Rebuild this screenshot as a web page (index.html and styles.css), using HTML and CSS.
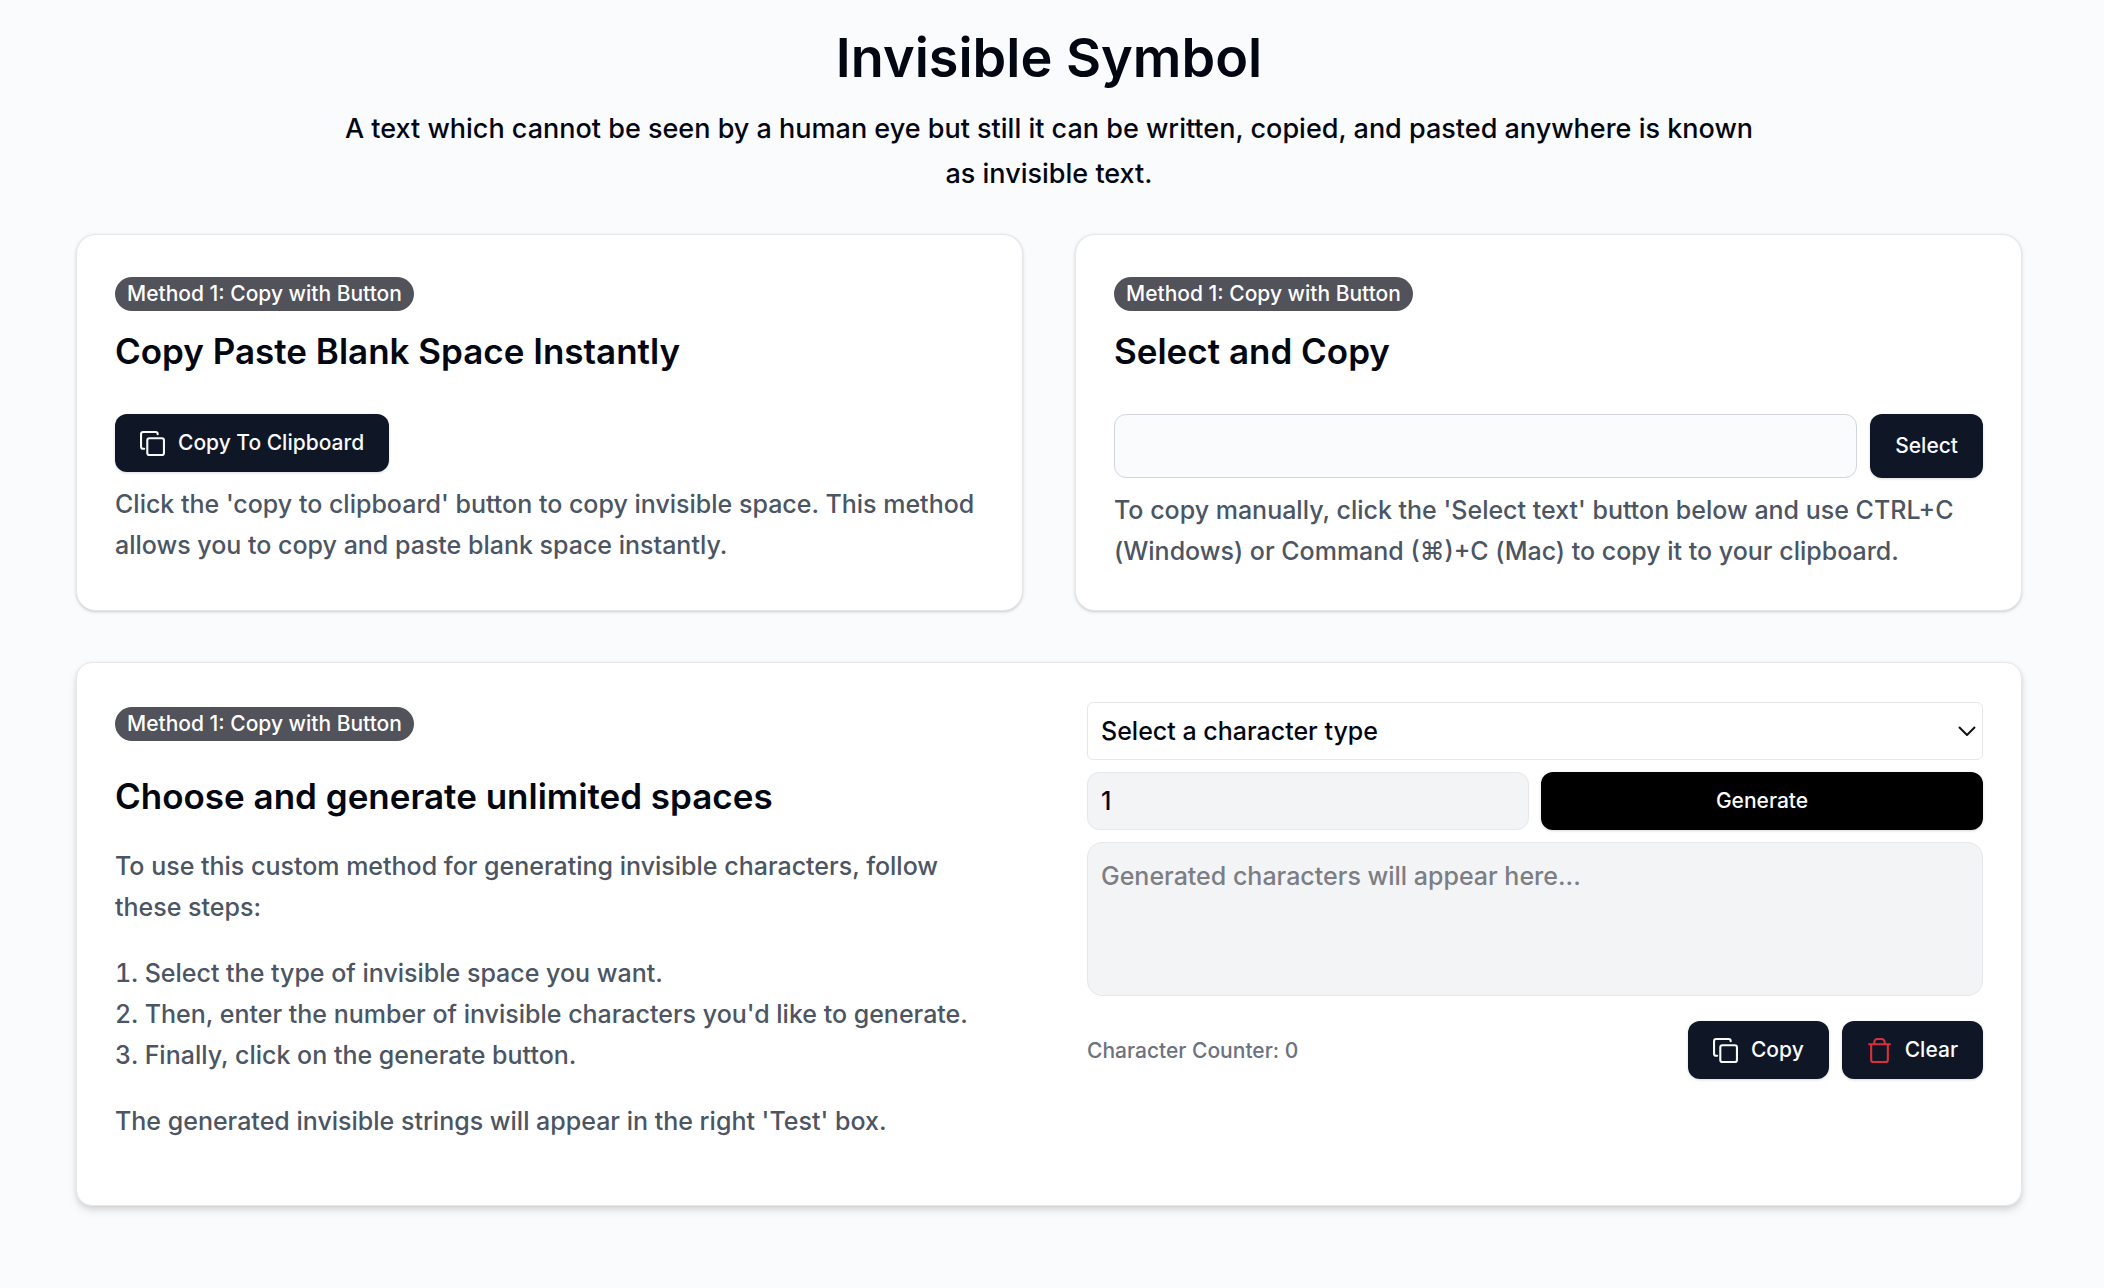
FILE: index.html
```html
<!DOCTYPE html>
<html lang="en">
<head>
  <meta charset="utf-8">
  <meta name="viewport" content="width=device-width, initial-scale=1">
  <title>Invisible Symbol</title>
  <link rel="stylesheet" href="styles.css">
</head>
<body>
  <main class="page">
    <header class="intro">
      <h1 class="title">Invisible Symbol</h1>
      <p class="lead">A text which cannot be seen by a human eye but still it can be written, copied, and pasted anywhere is known as invisible text.</p>
    </header>

    <div class="methods">
      <section class="card">
        <span class="badge">Method 1: Copy with Button</span>
        <h2 class="heading">Copy Paste Blank Space Instantly</h2>
        <button class="button" type="button">
          <svg class="icon" viewBox="0 0 24 24" aria-hidden="true"><rect x="7" y="7" width="16" height="16" rx="2"/><path d="M4 17H3a2 2 0 0 1-2-2V3a2 2 0 0 1 2-2h12a2 2 0 0 1 2 2"/></svg>
          Copy To Clipboard
        </button>
        <p class="text">Click the 'copy to clipboard' button to copy invisible space. This method allows you to copy and paste blank space instantly.</p>
      </section>

      <section class="card">
        <span class="badge">Method 1: Copy with Button</span>
        <h2 class="heading">Select and Copy</h2>
        <div class="select-row">
          <input class="blank-field" type="text" aria-label="Invisible text" readonly>
          <button class="button" type="button">Select</button>
        </div>
        <p class="text">To copy manually, click the 'Select text' button below and use CTRL+C (Windows) or Command (⌘)+C (Mac) to copy it to your clipboard.</p>
      </section>
    </div>

    <section class="card generator">
      <div class="guide">
        <span class="badge">Method 1: Copy with Button</span>
        <h2 class="heading">Choose and generate unlimited spaces</h2>
        <p class="text">To use this custom method for generating invisible characters, follow these steps:</p>
        <ol class="steps text">
          <li>Select the type of invisible space you want.</li>
          <li>Then, enter the number of invisible characters you'd like to generate.</li>
          <li>Finally, click on the generate button.</li>
        </ol>
        <p class="text">The generated invisible strings will appear in the right 'Test' box.</p>
      </div>

      <form class="controls">
        <div class="type">
          <select class="type-select" aria-label="Character type">
            <option>Select a character type</option>
          </select>
          <svg class="chevron" viewBox="0 0 18 10" aria-hidden="true"><path d="M1 1l8 8 8-8"/></svg>
        </div>
        <div class="amount-row">
          <input class="amount" type="text" inputmode="numeric" value="1" aria-label="Number of characters">
          <button class="button generate" type="button">Generate</button>
        </div>
        <textarea class="output" placeholder="Generated characters will appear here..." aria-label="Generated characters"></textarea>
        <div class="footer-row">
          <span class="counter">Character Counter: 0</span>
          <div class="actions">
            <button class="button" type="button">
              <svg class="icon" viewBox="0 0 24 24" aria-hidden="true"><rect x="7" y="7" width="16" height="16" rx="2"/><path d="M4 17H3a2 2 0 0 1-2-2V3a2 2 0 0 1 2-2h12a2 2 0 0 1 2 2"/></svg>
              Copy
            </button>
            <button class="button" type="button">
              <svg class="icon icon-danger" viewBox="0 0 24 24" aria-hidden="true"><path d="M2 6h20M4 6v15a2 2 0 0 0 2 2h12a2 2 0 0 0 2-2V6M7 6V4a3 3 0 0 1 3-3h4a3 3 0 0 1 3 3v2"/></svg>
              Clear
            </button>
          </div>
        </div>
      </form>
    </section>
  </main>
</body>
</html>
```
FILE: styles.css
```css
*,
*::before,
*::after {
  box-sizing: border-box;
}

body {
  margin: 0;
  background: #fafbfd;
  color: #030712;
  font-family: Inter, "Noto Sans", sans-serif;
  font-size: 25px;
  font-weight: 500;
  line-height: 41px;
}

h1,
h2,
p,
ol {
  margin: 0;
  padding: 0;
}

button,
input,
select,
textarea {
  margin: 0;
  font: inherit;
  color: inherit;
}

.page {
  padding: 30px 82px 80px 76px;
}

.intro {
  max-width: 1440px;
  margin: 0 auto 38px;
  text-align: center;
}

.title {
  margin-bottom: 20px;
  font-size: 54px;
  font-weight: 600;
  line-height: 56px;
}

.lead {
  font-size: 27px;
  line-height: 45px;
}

.methods {
  display: grid;
  grid-template-columns: 1fr 1fr;
  gap: 52px;
  margin-bottom: 51px;
}

.card {
  padding: 42px 38px 38px;
  border: 1px solid #e5e7eb;
  border-radius: 20px;
  background: #fff;
  box-shadow: 0 1px 4px rgba(0, 0, 0, 0.1), 0 1px 2px rgba(0, 0, 0, 0.1);
}

.badge {
  display: block;
  width: fit-content;
  padding: 0 12px;
  border-radius: 17px;
  background: #52525b;
  color: #fff;
  font-size: 21px;
  line-height: 34px;
}

.heading {
  margin: 15px 0 38px;
  font-size: 35px;
  font-weight: 600;
  line-height: 50px;
}

.text {
  color: #4b5563;
}

.button {
  display: inline-flex;
  align-items: center;
  justify-content: center;
  gap: 13px;
  height: 58px;
  padding: 0 25px;
  border: 0;
  border-radius: 12px;
  background: #0f1726;
  color: #f9fafb;
  font-size: 21px;
  line-height: 26px;
  box-shadow: 0 1px 3px rgba(0, 0, 0, 0.15);
  cursor: pointer;
}

.icon {
  width: 25px;
  height: 25px;
  fill: none;
  stroke: currentColor;
  stroke-width: 2;
  stroke-linecap: round;
  stroke-linejoin: round;
}

.icon-danger {
  color: #dc2f3c;
}

.methods .text {
  margin-top: 12px;
}

.methods .button {
  display: flex;
}

.select-row {
  display: flex;
  gap: 13px;
}

.select-row .button {
  height: 64px;
}

.blank-field {
  flex: 1;
  min-width: 0;
  height: 64px;
  padding: 0 16px;
  border: 1px solid #d1d5db;
  border-radius: 12px;
  background: #fafbfd;
}

.generator {
  display: grid;
  grid-template-columns: 1fr 1fr;
  gap: 76px;
  padding: 39px 38px 63px;
  border-radius: 16px;
  box-shadow: 0 5px 8px rgba(0, 0, 0, 0.1), 0 2px 5px rgba(0, 0, 0, 0.08);
}

.guide {
  display: grid;
  gap: 25px;
  padding-top: 5px;
}

.guide .heading {
  margin: 5px 0 0;
}

.steps {
  list-style-position: inside;
}

.controls {
  display: grid;
  align-content: start;
  gap: 12px;
}

.type {
  display: grid;
  align-items: center;
}

.type-select {
  grid-area: 1 / 1;
  width: 100%;
  height: 58px;
  padding: 0 13px;
  border: 1px solid #e5e7eb;
  border-radius: 6px;
  background: #fff;
  appearance: none;
}

.chevron {
  grid-area: 1 / 1;
  justify-self: end;
  width: 18px;
  height: 10px;
  margin-right: 7px;
  fill: none;
  stroke: #111;
  stroke-width: 2;
  pointer-events: none;
}

.amount-row {
  display: grid;
  grid-template-columns: 1fr 1fr;
  gap: 12px;
}

.amount {
  width: 100%;
  height: 58px;
  padding: 0 13px;
  border: 1px solid #e5e7eb;
  border-radius: 12px;
  background: #f3f4f6;
}

.generate {
  background: #000;
}

.output {
  display: block;
  width: 100%;
  height: 154px;
  padding: 13px;
  border: 1px solid #e5e7eb;
  border-radius: 15px;
  background: #f3f4f6;
  resize: none;
}

.output::placeholder {
  color: #7c7e84;
}

.footer-row {
  display: flex;
  align-items: center;
  justify-content: space-between;
  margin-top: 13px;
}

.counter {
  color: #6b7280;
  font-size: 21px;
}

.actions {
  display: flex;
  gap: 13px;
}
```
